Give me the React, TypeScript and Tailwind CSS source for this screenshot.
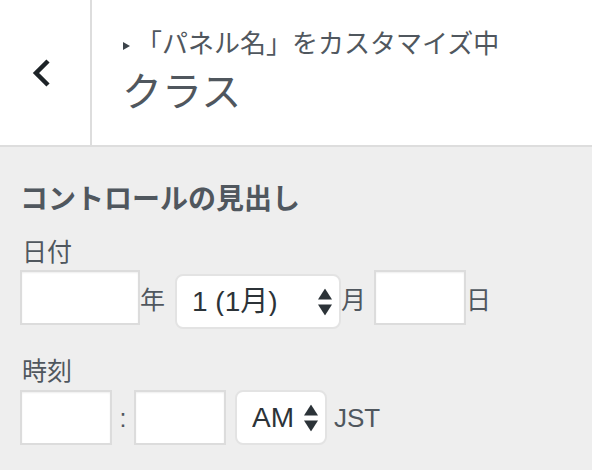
import React from "react";

const FONT = '"Liberation Sans", "Noto Sans CJK JP", sans-serif';

function Arrows() {
  return (
    <svg
      width="14"
      height="27"
      viewBox="0 0 14 27"
      className="pointer-events-none absolute right-[9px] top-1/2 -translate-y-1/2"
    >
      <path d="M7 0 L14 11 L0 11 Z" fill="#2c3338" />
      <path d="M0 16 L14 16 L7 27 Z" fill="#2c3338" />
    </svg>
  );
}

function FakeSelect({ value, width, extra }: { value: string; width: string; extra?: string }) {
  return (
    <div className={`relative ${width} h-[55px] ${extra ?? ""}`}>
      <select
        defaultValue={value}
        className="h-full w-full appearance-none rounded-[8px] border-2 border-[#e3e3e3] bg-white pl-[15px] text-[28px] leading-none text-[#2c3338] outline-none"
        style={{ fontFamily: FONT }}
      >
        <option value={value}>{value}</option>
      </select>
      <Arrows />
    </div>
  );
}

function TextInput({ width }: { width: string }) {
  return (
    <input
      type="text"
      className={`${width} h-[55px] border-2 border-[#dcdcdc] bg-white shadow-[inset_0_1px_2px_rgba(0,0,0,0.07)] outline-none`}
    />
  );
}

export default function App() {
  return (
    <div className="h-[470px] w-[592px] overflow-hidden bg-[#eeeeee]" style={{ fontFamily: FONT }}>
      {/* Header */}
      <div className="flex h-[147px] border-b-2 border-[#dddddd] bg-white">
        <div className="flex w-[92px] items-center border-r-2 border-[#dddddd] pl-[32px]">
          <svg width="20" height="30" viewBox="0 0 20 30">
            <path
              d="M16 3 L4 15 L16 27"
              fill="none"
              stroke="#1d2327"
              strokeWidth="4.5"
              strokeLinejoin="miter"
            />
          </svg>
        </div>
        <div className="flex flex-col pl-[30px] pt-[29px]">
          <div className="flex h-[30px] items-center text-[26px] leading-[30px] text-[#50575e]">
            <svg width="7" height="8" viewBox="0 0 7 8" className="ml-[1px] mr-[6px] mt-[3px]">
              <path d="M0 0 L7 4 L0 8 Z" fill="#3c434a" />
            </svg>
            <span>「パネル名」をカスタマイズ中</span>
          </div>
          <div className="mt-[9px] text-[40px] leading-[48px] text-[#50575e]">クラス</div>
        </div>
      </div>

      {/* Content */}
      <div className="pl-[20px] pt-[35px]">
        <div className="text-[28px] font-bold leading-[36px] text-[#50575e]">コントロールの見出し</div>

        <div className="mt-[19px] ml-[2px] text-[25px] leading-[30px] text-[#50575e]">日付</div>
        <div className="mt-[3px] flex items-start">
          <TextInput width="w-[120px]" />
          <span className="self-center text-[25px] leading-[30px] text-[#50575e]">年</span>
          <FakeSelect value="1 (1月)" width="w-[166px]" extra="ml-[10px] mt-[4px]" />
          <span className="self-center text-[25px] leading-[30px] text-[#50575e]">月</span>
          <div className="ml-[8px]">
            <TextInput width="w-[92px]" />
          </div>
          <span className="self-center text-[25px] leading-[30px] text-[#50575e]">日</span>
        </div>

        <div className="mt-[27px] ml-[2px] text-[25px] leading-[30px] text-[#50575e]">時刻</div>
        <div className="mt-[4px] flex items-center">
          <TextInput width="w-[92px]" />
          <span className="w-[22px] text-center text-[25px] leading-[30px] text-[#50575e]">:</span>
          <TextInput width="w-[92px]" />
          <FakeSelect value="AM" width="w-[92px]" extra="ml-[9px]" />
          <span className="ml-[7px] text-[26px] leading-[30px] text-[#50575e]">JST</span>
        </div>
      </div>
    </div>
  );
}
